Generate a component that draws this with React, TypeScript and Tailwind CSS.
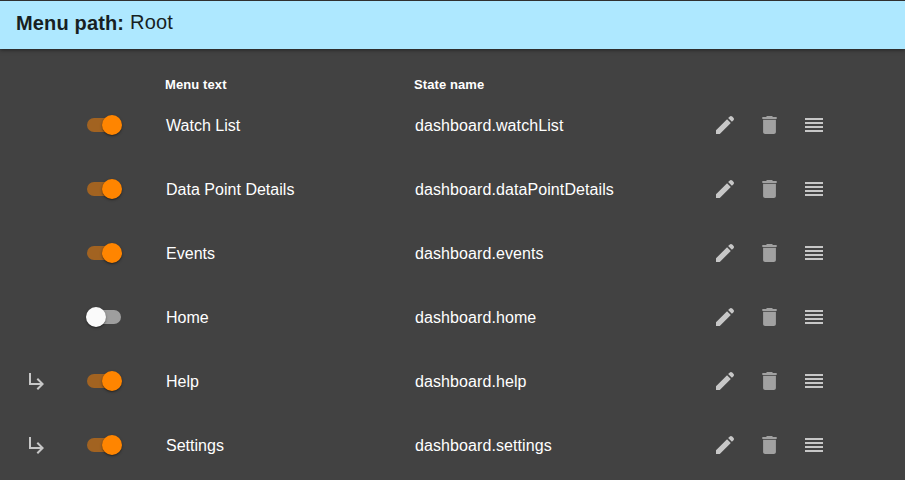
import React from "react";

type MenuItem = { text: string; state: string; enabled: boolean; nested?: boolean };

const items: MenuItem[] = [
  { text: "Watch List", state: "dashboard.watchList", enabled: true },
  { text: "Data Point Details", state: "dashboard.dataPointDetails", enabled: true },
  { text: "Events", state: "dashboard.events", enabled: true },
  { text: "Home", state: "dashboard.home", enabled: false },
  { text: "Help", state: "dashboard.help", enabled: true, nested: true },
  { text: "Settings", state: "dashboard.settings", enabled: true, nested: true },
];

function Icon({ d, className = "" }: { d: string; className?: string }) {
  return (
    <svg viewBox="0 0 24 24" className={`size-6 shrink-0 fill-current ${className}`} aria-hidden="true">
      <path d={d} />
    </svg>
  );
}

const ARROW = "M19 15l-6 6-1.42-1.42L15.17 16H4V4h2v10h9.17l-3.59-3.58L13 9l6 6z";
const PENCIL =
  "M3 17.25V21h3.75L17.81 9.94l-3.75-3.75L3 17.25zM20.3 7.45c.95-.95.95-1.85.1-2.7l-1.15-1.15c-.85-.85-1.75-.85-2.7.1l-1.42 1.42 3.75 3.75 1.42-1.42z";
const TRASH = "M6.1 6.8v12.2c0 1.1.9 2 2 2h8.8c1.1 0 2-.9 2-2V6.8zM19.7 4.1h-3.7l-1-1h-5l-1 1H5.3v1.8h14.4z";
const HANDLE = "M3 5h18v2H3zM3 9h18v2H3zM3 13h18v2H3zM3 17h18v2H3z";

function Toggle({ on }: { on: boolean }) {
  return (
    <span role="switch" aria-checked={on} className="relative flex h-5 w-9 items-center">
      <span className={`ml-px h-3.5 w-[34px] rounded-full ${on ? "bg-[#a26321]" : "bg-[#9e9e9e]"}`} />
      <span
        className={`absolute top-0 size-5 rounded-full shadow-[0_1px_3px_rgba(0,0,0,0.3),0_1px_1px_rgba(0,0,0,0.25)] ${
          on ? "left-4 bg-[#ff8500]" : "left-0 bg-[#fafafa]"
        }`}
      />
    </span>
  );
}

function Row({ item }: { item: MenuItem }) {
  return (
    <li className="flex h-16 items-center pl-[25px]">
      <div className="w-[61px] shrink-0 text-[#c7c7c7]">{item.nested && <Icon d={ARROW} />}</div>
      <div className="w-20 shrink-0">
        <Toggle on={item.enabled} />
      </div>
      <span className="w-[249px] shrink-0 pt-0.5 text-base tracking-[0.02px]">{item.text}</span>
      <span className="w-[298px] shrink-0 pt-0.5 text-base tracking-[0.09px]">{item.state}</span>
      <div className="flex items-center text-[#c7c7c7]">
        <Icon d={PENCIL} />
        <Icon d={TRASH} className="ml-5 text-[#a1a1a1]" />
        <Icon d={HANDLE} className="ml-[21px]" />
      </div>
    </li>
  );
}

export default function App() {
  return (
    <main className="flex h-[480px] w-[905px] flex-col overflow-hidden border-t border-[#303030] bg-[#424242] font-['Liberation_Sans',Arial,sans-serif] text-white">
      <header className="flex h-12 shrink-0 items-start bg-[#aee8ff] pl-4 pt-[7px] text-xl leading-7 text-[#171f22] shadow-[0_1px_4px_rgba(0,0,0,0.5)]">
        <strong className="w-[114px] shrink-0 pt-px tracking-[0.15px]">Menu path:</strong>
        <span className="tracking-[0.2px]">Root</span>
      </header>
      <div className="flex h-11 shrink-0 items-end pl-[165px] text-[13px] font-bold leading-[17px] tracking-[0.1px]">
        <span className="w-[249px]">Menu text</span>
        <span>State name</span>
      </div>
      <ul className="flex flex-col">
        {items.map((item) => (
          <Row key={item.state} item={item} />
        ))}
      </ul>
    </main>
  );
}
